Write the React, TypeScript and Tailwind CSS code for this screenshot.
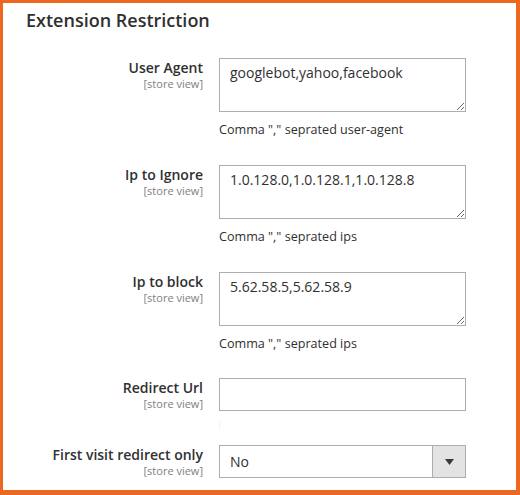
import React from 'react';

const fields = [
  { label: 'User Agent', value: 'googlebot,yahoo,facebook', note: 'Comma "," seprated user-agent' },
  { label: 'Ip to Ignore', value: '1.0.128.0,1.0.128.1,1.0.128.8', note: 'Comma "," seprated ips' },
  { label: 'Ip to block', value: '5.62.58.5,5.62.58.9', note: 'Comma "," seprated ips' },
];

function FieldLabel({ text }: { text: string }) {
  return (
    <div className="w-[200px] shrink-0 text-right">
      <div className="text-[14px] leading-[20px] font-semibold text-[#303030]">{text}</div>
      <div className="text-[11px] leading-[12px] text-[#808080]">[store view]</div>
    </div>
  );
}

export default function App() {
  return (
    <div
      className="w-[520px] h-[495px] bg-white border-[#ec671f] border-l-[3px] border-t-[3px] border-r-[4px] border-b-[5px] overflow-hidden"
      style={{ fontFamily: '"Open Sans", sans-serif' }}
    >
      <h2 className="pl-[23px] pt-[5px] text-[18px] leading-[24px] font-semibold text-[#303030]">
        Extension Restriction
      </h2>

      <div className="mt-[26px] flex flex-col">
        {fields.map((f) => (
          <div key={f.label} className="flex gap-4 mb-[26px]">
            <FieldLabel text={f.label} />
            <div className="w-[247px]">
              <textarea
                defaultValue={f.value}
                className="block w-full h-[54px] border border-[#adadad] bg-white px-[10px] pt-[4px] text-[14px] leading-[20px] text-[#303030] outline-none"
                style={{ fontFamily: '"Open Sans", sans-serif' }}
              />
              <div className="mt-[9px] text-[12.6px] leading-[18px] text-[#303030]">{f.note}</div>
            </div>
          </div>
        ))}

        <div className="flex gap-4 -mt-px">
          <FieldLabel text="Redirect Url" />
          <div className="w-[247px]">
            <input
              type="text"
              className="block w-full h-[33px] border border-[#adadad] bg-white px-[10px] text-[14px] text-[#303030] outline-none"
            />
            <div className="mt-[10px] w-px h-[9px] bg-[#fbf5d6]" />
          </div>
        </div>

        <div className="flex gap-4 mt-[15px]">
          <FieldLabel text="First visit redirect only" />
          <div className="w-[247px] h-[33px] border border-[#adadad] flex">
            <div className="flex-1 pl-[10px] flex items-center text-[14px] text-[#303030]">No</div>
            <div className="w-[33px] border-l border-[#adadad] bg-[#e3e3e3] flex items-center justify-center">
              <svg width="9" height="6" viewBox="0 0 9 6">
                <path d="M0 0 L9 0 L4.5 6 Z" fill="#41362f" />
              </svg>
            </div>
          </div>
        </div>
      </div>
    </div>
  );
}
